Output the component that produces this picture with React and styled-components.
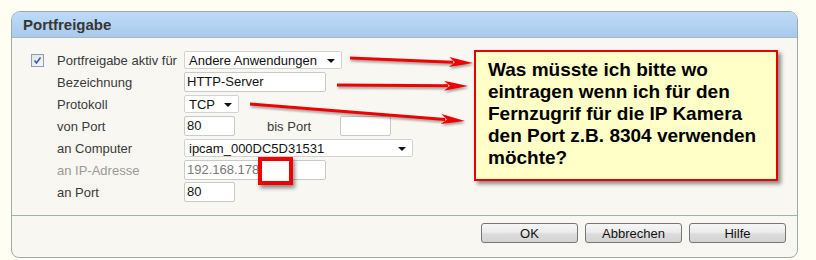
import React from 'react';
import styled, { createGlobalStyle } from 'styled-components';

const GlobalStyle = createGlobalStyle`
  html, body {
    margin: 0;
    padding: 0;
    background: #fefef3;
  }
  body {
    font-family: 'Liberation Sans', Arial, sans-serif;
  }
`;

const Page = styled.div`
  position: relative;
  width: 816px;
  height: 260px;
  padding: 11px 0 0 11px;
  box-sizing: border-box;
  overflow: hidden;
`;

const Panel = styled.div`
  width: 787px;
  box-sizing: border-box;
  border: 1px solid #9aabab;
  border-radius: 9px 9px 8px 8px;
  background: #f8f7f2;
  overflow: hidden;
`;

const Header = styled.div`
  height: 25px;
  display: flex;
  align-items: center;
  padding-left: 11px;
  background: linear-gradient(#bddbf6, #a8caeb);
  border-bottom: 1px solid #a3b9c9;
  font-size: 15px;
  font-weight: bold;
  color: #363636;
`;

const Body = styled.div`
  padding: 11px 0 12px 19px;
`;

const Form = styled.div`
  display: grid;
  grid-template-columns: 26px 127px 1fr;
  grid-auto-rows: 22px;
  align-items: center;
`;

const Label = styled.div`
  font-size: 13px;
  color: ${(p) => (p.$disabled ? '#9a9a9a' : '#3a3a3a')};
  white-space: nowrap;
`;

const Check = styled.span`
  width: 11px;
  height: 11px;
  border: 1px solid #8f9db0;
  background: linear-gradient(135deg, #dfe4ec, #f6f7fa);
  display: flex;
  align-items: center;
  justify-content: center;
`;

const Controls = styled.div`
  display: flex;
  align-items: center;
`;

const Input = styled.div`
  box-sizing: border-box;
  width: ${(p) => p.$w}px;
  height: 20px;
  border: 1px solid #c9c9c9;
  border-radius: 2px;
  background: #fff;
  padding-left: 2px;
  font-size: 13px;
  line-height: 18px;
  color: ${(p) => (p.$muted ? '#7a7a7a' : '#111')};
  white-space: nowrap;
`;

const Select = styled.div`
  box-sizing: border-box;
  width: ${(p) => p.$w}px;
  height: 18px;
  border: 1px solid #d2d2d2;
  border-radius: 2px;
  background: #fff;
  padding: 0 6px 0 4px;
  display: flex;
  align-items: center;
  justify-content: space-between;
  font-size: 13px;
  color: #111;
  white-space: nowrap;
`;

const Caret = styled.span`
  width: 0;
  height: 0;
  border-left: 4px solid transparent;
  border-right: 4px solid transparent;
  border-top: 4px solid #111;
  margin-top: 2px;
`;

const InlineLabel = styled(Label)`
  width: 73px;
  margin-left: 32px;
`;

const Footer = styled.div`
  border-top: 1px solid #9fb1ae;
  padding: 7px 11px 14px 0;
  display: flex;
  justify-content: flex-end;
  gap: 7px;
`;

const Button = styled.button`
  width: 97px;
  height: 20px;
  border: 1px solid #767676;
  border-radius: 3px;
  background: linear-gradient(#f6f6f6 0%, #ececec 45%, #dcdcdc 55%, #d4d4d4 100%);
  font-family: 'Liberation Sans', Arial, sans-serif;
  font-size: 13px;
  color: #111;
  padding: 0;
`;

const Arrows = styled.svg`
  position: absolute;
  left: 0;
  top: 0;
  filter: drop-shadow(1px 2px 1px rgba(0, 0, 0, 0.35));
`;

const Callout = styled.div`
  position: absolute;
  left: 474px;
  top: 50px;
  width: 304px;
  height: 131px;
  box-sizing: border-box;
  border: 2px solid #e60000;
  background: #ffffc8;
  box-shadow: 3px 3px 4px rgba(0, 0, 0, 0.45);
  padding: 7px 0 0 12px;
  font-size: 19px;
  font-weight: bold;
  line-height: 22px;
  color: #000;
`;

const Marker = styled.div`
  position: absolute;
  left: 258px;
  top: 157px;
  width: 35px;
  height: 28px;
  box-sizing: border-box;
  border: 4px solid #f00000;
  background: #fff;
  box-shadow: 2px 3px 4px rgba(0, 0, 0, 0.45);
`;

const arrows = [
  [350, 58, 473, 63],
  [337, 85, 468, 86],
  [250, 104, 465, 121],
];

function Arrow({ x1, y1, x2, y2 }) {
  const a = Math.atan2(y2 - y1, x2 - x1);
  const len = 24;
  const half = 5;
  const bx = x2 - Math.cos(a) * len;
  const by = y2 - Math.sin(a) * len;
  const px = -Math.sin(a) * half;
  const py = Math.cos(a) * half;
  return (
    <g>
      <line x1={x1} y1={y1} x2={bx + Math.cos(a) * 4} y2={by + Math.sin(a) * 4} stroke="#f00000" strokeWidth="3" />
      <polygon points={`${x2},${y2} ${bx + px},${by + py} ${bx + Math.cos(a) * 6},${by + Math.sin(a) * 6} ${bx - px},${by - py}`} fill="#f00000" />
    </g>
  );
}

export default function App() {
  return (
    <Page>
      <GlobalStyle />
      <Panel>
        <Header>Portfreigabe</Header>
        <Body>
          <Form>
            <Check>
              <svg width="9" height="9" viewBox="0 0 9 9">
                <path d="M1.5 4.5 L3.5 7 L7.5 1.5" fill="none" stroke="#3a5aa8" strokeWidth="1.6" />
              </svg>
            </Check>
            <Label>Portfreigabe aktiv für</Label>
            <Controls>
              <Select $w={158}>Andere Anwendungen<Caret /></Select>
            </Controls>

            <span />
            <Label>Bezeichnung</Label>
            <Controls>
              <Input $w={142}>HTTP-Server</Input>
            </Controls>

            <span />
            <Label>Protokoll</Label>
            <Controls>
              <Select $w={55}>TCP<Caret /></Select>
            </Controls>

            <span />
            <Label>von Port</Label>
            <Controls>
              <Input $w={51}>80</Input>
              <InlineLabel>bis Port</InlineLabel>
              <Input $w={51} />
            </Controls>

            <span />
            <Label>an Computer</Label>
            <Controls>
              <Select $w={229}>ipcam_000DC5D31531<Caret /></Select>
            </Controls>

            <span />
            <Label $disabled>an IP-Adresse</Label>
            <Controls>
              <Input $w={142} $muted>192.168.178</Input>
            </Controls>

            <span />
            <Label>an Port</Label>
            <Controls>
              <Input $w={51}>80</Input>
            </Controls>
          </Form>
        </Body>
        <Footer>
          <Button>OK</Button>
          <Button>Abbrechen</Button>
          <Button>Hilfe</Button>
        </Footer>
      </Panel>

      <Marker />
      <Arrows width="816" height="260">
        {arrows.map(([x1, y1, x2, y2], i) => (
          <Arrow key={i} x1={x1} y1={y1} x2={x2} y2={y2} />
        ))}
      </Arrows>
      <Callout>
        Was müsste ich bitte wo
        <br />
        eintragen wenn ich für den
        <br />
        Fernzugrif für die IP Kamera
        <br />
        den Port z.B. 8304 verwenden
        <br />
        möchte?
      </Callout>
    </Page>
  );
}
